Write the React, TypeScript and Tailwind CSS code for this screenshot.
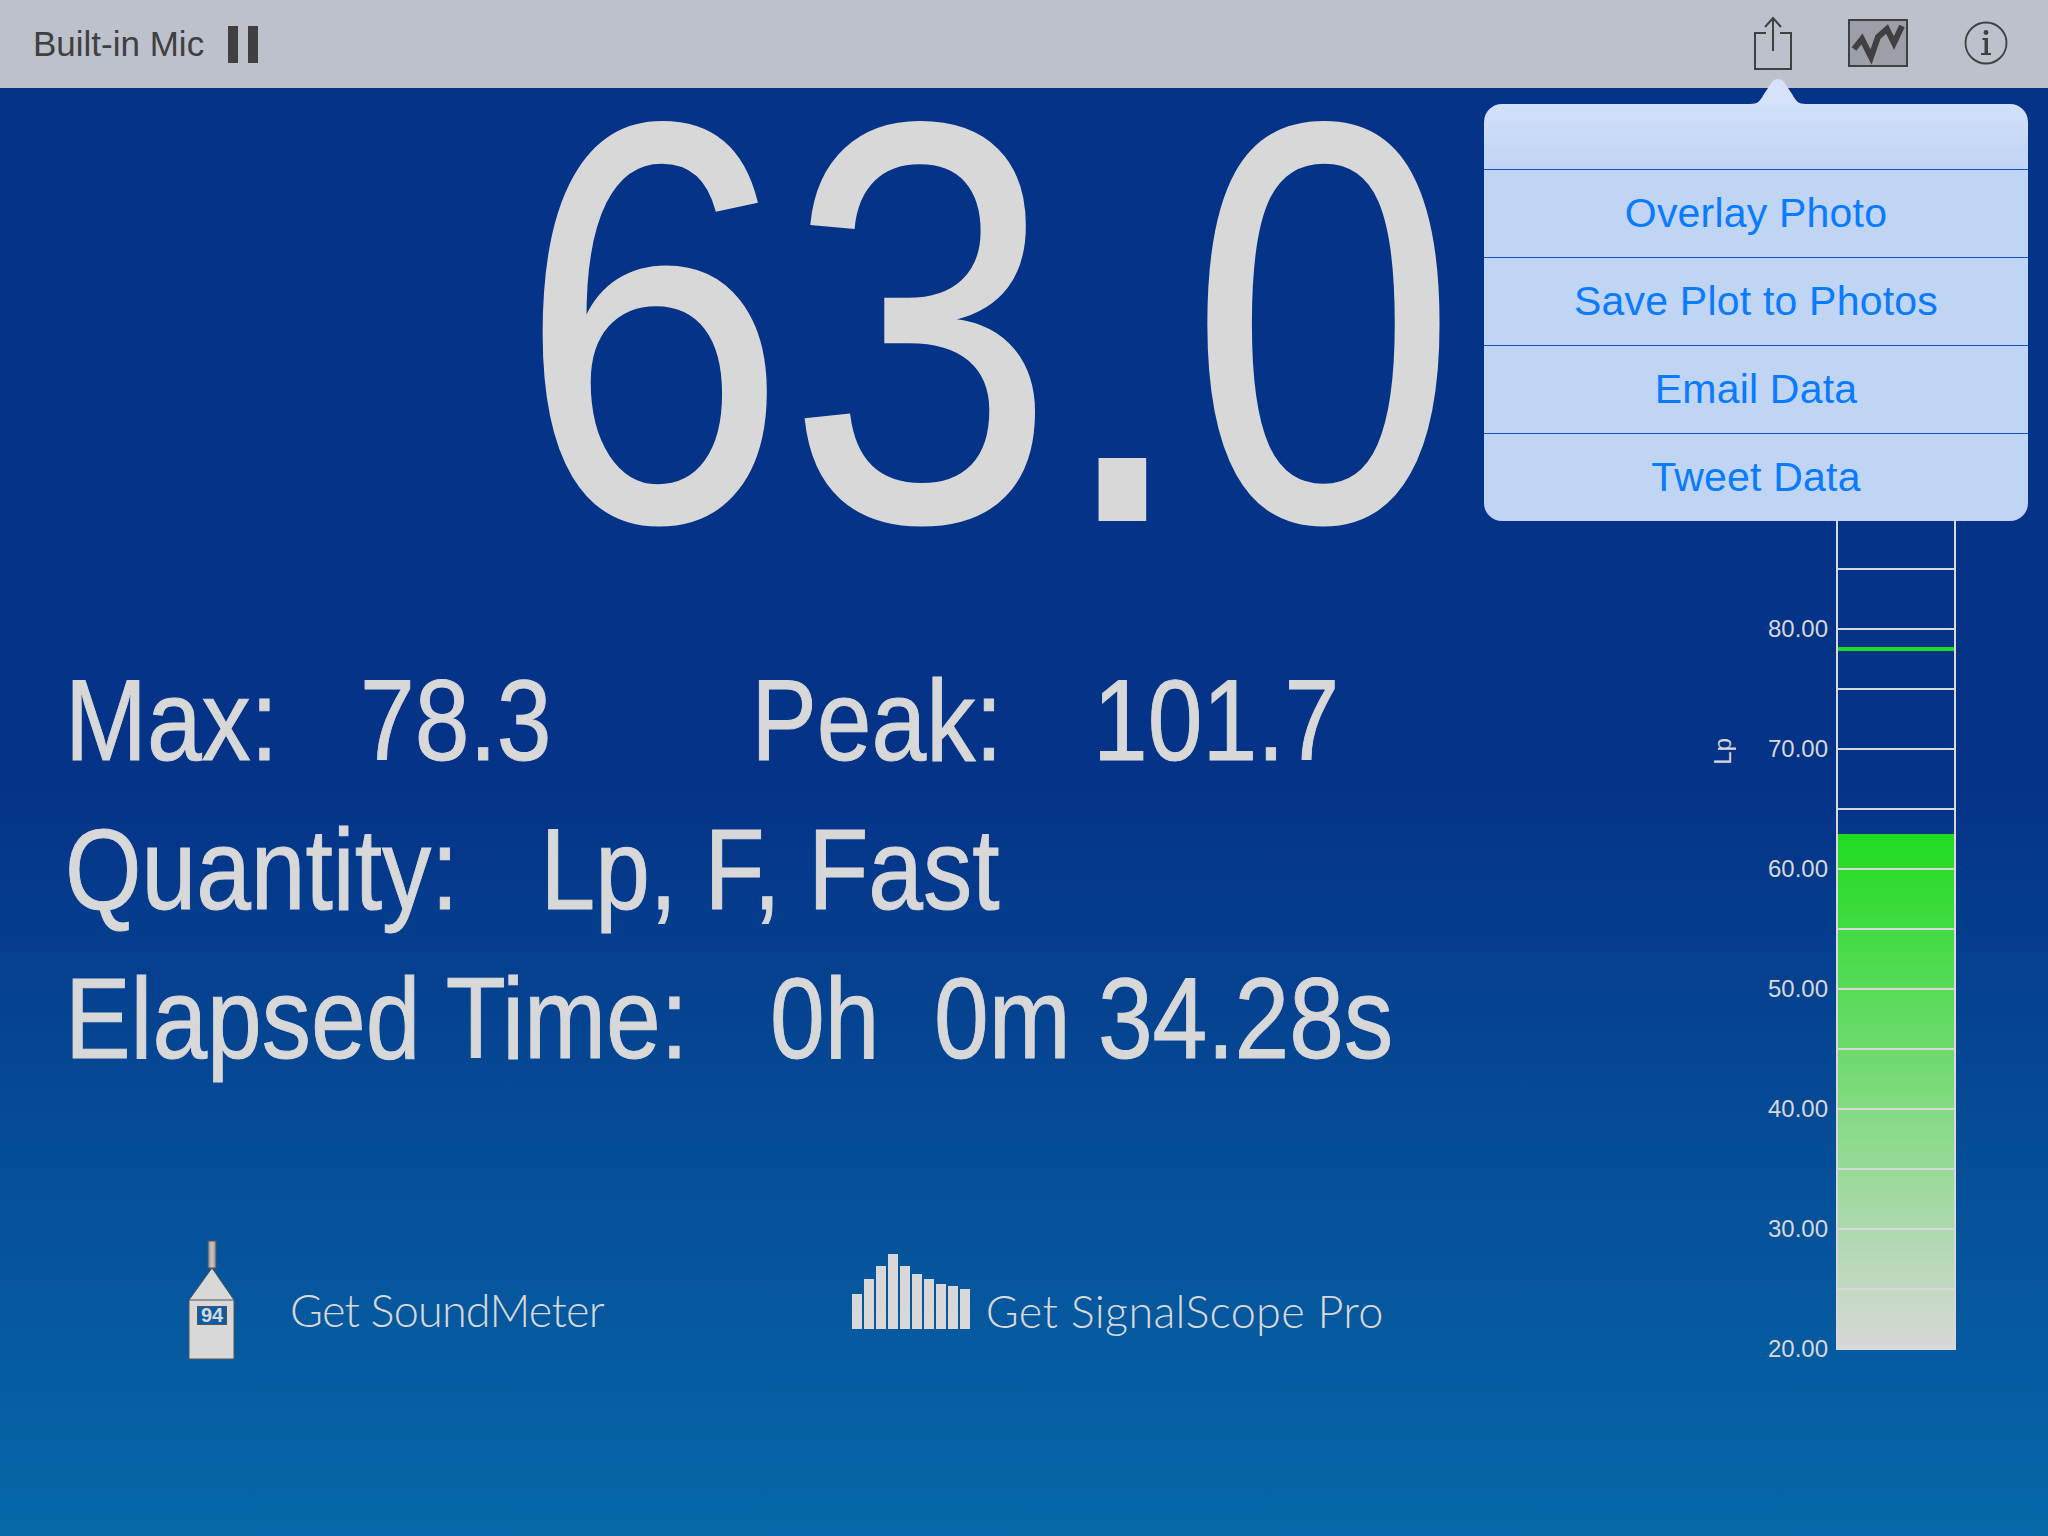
const rows = ["Overlay Photo", "Save Plot to Photos", "Email Data", "Tweet Data"];
const ticks = [90, 80, 70, 60, 50, 40, 30];
const bars = [35, 50, 63, 75, 63, 55, 50, 45, 43, 40];

function ShareIcon() {
  return (
    <svg width="40" height="56" viewBox="0 0 40 56" fill="none" stroke="#404040" strokeWidth="2">
      <path d="M13 17H2V53H38V17H27" />
      <path d="M20 2V35" />
      <path d="M12 11L20 2L28 11" />
    </svg>
  );
}

function ChartIcon() {
  return (
    <svg width="60" height="48" viewBox="0 0 60 48">
      <rect x="1" y="1" width="58" height="46" fill="#9c9ea8" stroke="#404040" strokeWidth="2" />
      <path d="M6 30L14 20L23 38L30 18L39 10L46 24L54 7" fill="none" stroke="#404040" strokeWidth="6" />
    </svg>
  );
}

function InfoIcon() {
  return (
    <svg width="44" height="44" viewBox="0 0 44 44">
      <circle cx="22" cy="22" r="20.5" fill="none" stroke="#404040" strokeWidth="1.8" />
      <circle cx="22" cy="11.5" r="2.4" fill="#404040" />
      <path d="M18.5 17H24V32H27V34H17V32H20.5V19H18.5Z" fill="#404040" />
    </svg>
  );
}

function MeterIcon() {
  return (
    <svg width="48" height="120" viewBox="0 0 48 120">
      <defs>
        <linearGradient id="stem">
          <stop offset="0" stopColor="#8f8f8f" />
          <stop offset="0.5" stopColor="#c8c8c8" />
          <stop offset="1" stopColor="#8f8f8f" />
        </linearGradient>
      </defs>
      <rect x="20" y="1" width="8" height="27" fill="url(#stem)" stroke="#555" />
      <path d="M24 28L46 60V119H1V60Z" fill="#d8d8d8" stroke="#555" />
      <path d="M1 60H46" stroke="#555" />
      <rect x="9.5" y="66.5" width="29" height="18" fill="#0a5da2" stroke="#555" />
      <text x="24" y="82" textAnchor="middle" fontFamily="Liberation Sans, sans-serif" fontWeight="700" fontSize="20" fill="#d8d8d8">94</text>
    </svg>
  );
}

function Popover() {
  return (
    <div className="absolute left-[1484px] top-[78px] w-[544px]">
      <svg className="absolute left-[260px] top-0" width="68" height="27" viewBox="0 0 68 27">
        <path d="M0 26H6C14 26 16 23 20 16L28 4C31 0 37 0 40 4L48 16C52 23 54 26 62 26H68V27H0Z" fill="#d6e2f9" />
      </svg>
      <div className="mt-[26px] h-[417px] overflow-hidden rounded-[18px] bg-[linear-gradient(#d2e0f9,#c0d4f4_65px)]">
        <div className="h-[65px]" />
        {rows.map((r) => (
          <div
            key={r}
            className="flex h-[88px] items-center justify-center border-t border-[#0f50c4] font-['Liberation_Sans',sans-serif] text-[41px] tracking-[0.2px] text-[#0a7bff]"
          >
            {r}
          </div>
        ))}
      </div>
    </div>
  );
}

export default function App() {
  return (
    <div className="relative flex h-[1536px] w-[2048px] flex-col overflow-hidden bg-[#053387] font-['Liberation_Sans',sans-serif] text-[#d8d8d8]">
      <div className="flex h-[88px] shrink-0 items-center bg-[#bdc1cc] pl-[33px] text-[#404040]">
        <span className="text-[35px]">Built-in Mic</span>
        <div className="ml-[24px] flex gap-[10px]">
          <div className="h-[37px] w-[10px] bg-[#404040]" />
          <div className="h-[37px] w-[10px] bg-[#404040]" />
        </div>
        <div className="ml-auto mr-[40px] flex items-start self-start">
          <div className="mr-[55px] mt-[16px]"><ShareIcon /></div>
          <div className="mr-[56px] mt-[19px]"><ChartIcon /></div>
          <div className="mt-[21px]"><InfoIcon /></div>
        </div>
      </div>

      <div className="flex min-h-0 flex-1 bg-[linear-gradient(#053387_0%,#053387_48%,#0668a8_100%)]">
        <div className="flex-1">
          <div className="ml-[519px] mt-[-25px] h-[520px] origin-left scale-x-[0.846] text-[570px] leading-[520px] [-webkit-text-stroke:2px_#d8d8d8]">63.0</div>
          <div className="ml-[65px] mt-[63px] text-[115px] leading-[149px] [-webkit-text-stroke:1px_#d8d8d8]">
            <div className="origin-left scale-x-[0.855] whitespace-pre">
              {"Max:   78.3       "}
              <span className="ml-[10px]">Peak:</span>
              <span className="ml-[10px]">{"   101.7"}</span>
            </div>
            <div className="origin-left scale-x-[0.855] whitespace-pre">{"Quantity:   Lp, F, Fast"}</div>
            <div className="origin-left scale-x-[0.855] whitespace-pre">{"Elapsed Time:   0h  0m 34.28s"}</div>
          </div>
          <div className="mt-[147px] flex items-end">
            <div className="ml-[188px]"><MeterIcon /></div>
            <span className="mb-[16px] ml-[54px] font-['Lato',sans-serif] text-[45px] font-light tracking-[-0.8px]">Get SoundMeter</span>
            <div className="mb-[31px] ml-[248px] flex items-end gap-[2px]">
              {bars.map((h, i) => (
                <div key={i} className="w-[10px] bg-[#d8d8d8]" style={{ height: h }} />
              ))}
            </div>
            <span className="mb-[15px] ml-[16px] font-['Lato',sans-serif] text-[45px] font-light tracking-[0.3px]">Get SignalScope Pro</span>
          </div>
        </div>

        <div className="mr-[92px] mt-[420px] flex h-[842px] items-start">
          <span className="mr-[33px] mt-[230px] rotate-180 text-[24px] leading-none [writing-mode:vertical-rl]">Lp</span>
          <div className="mr-[8px] mt-[1px] w-[60px] text-right text-[24px]">
            {ticks.map((t) => (
              <div key={t} className="h-[120px] leading-[0px]">{t}.00</div>
            ))}
            <div className="leading-[0px]">20.00</div>
          </div>
          <div className="relative h-[842px] w-[120px] border-x-2 border-b-0 border-[#d8d8d8]">
            <div className="absolute inset-x-0 bottom-0 top-[326px] bg-[linear-gradient(#20dc20,#d8d8d8)]" />
            <div className="absolute inset-x-0 top-[139px] h-[4px] bg-[#20dc20]" />
            {Array.from({ length: 14 }).map((_, i) => (
              <div key={i} className="relative h-[60px] border-t-2 border-[#d8d8d8]" />
            ))}
          </div>
        </div>
      </div>

      <Popover />
    </div>
  );
}
